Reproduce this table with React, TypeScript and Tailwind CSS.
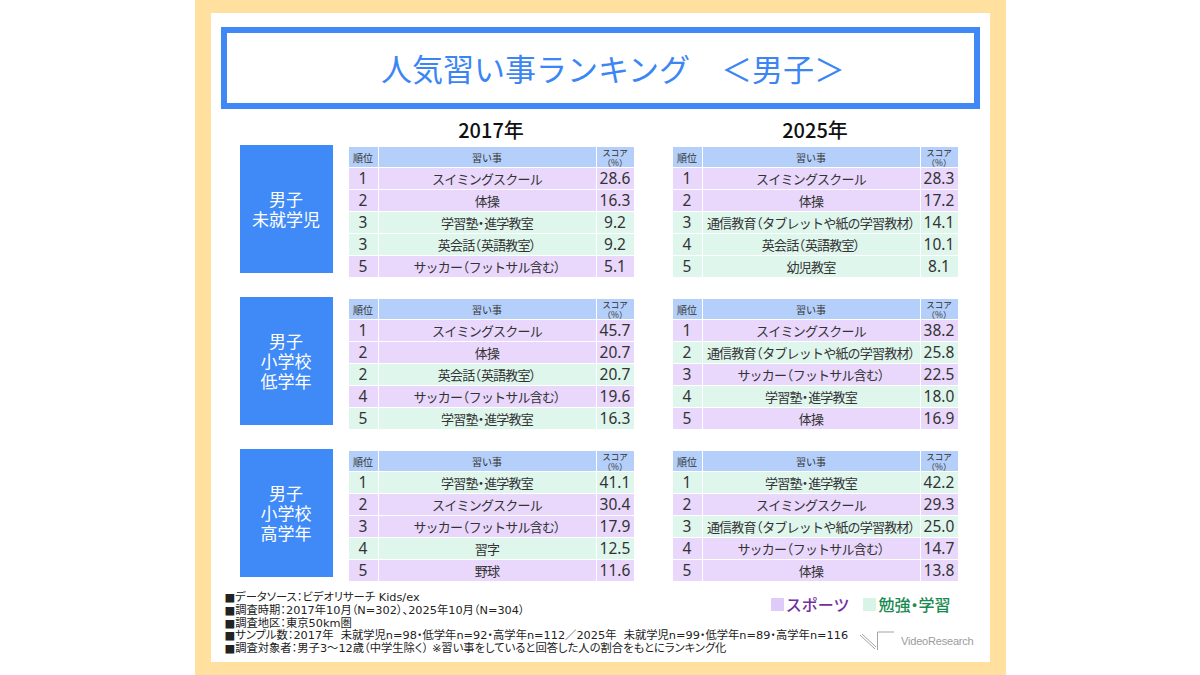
type Row = [string, string, string, 's' | 'g']

type Group = {
  label: string[]
  y2017: Row[]
  y2025: Row[]
}

const SWIM = 'スイミングスクール'
const GYM = '体操'
const JUKU = '学習塾・進学教室'
const EIKAIWA = '英会話（英語教室）'
const SOCCER = 'サッカー（フットサル含む）'
const TSUSHIN = '通信教育（タブレットや紙の学習教材）'

const GROUPS: Group[] = [
  {
    label: ['男子', '未就学児'],
    y2017: [
      ['1', SWIM, '28.6', 's'],
      ['2', GYM, '16.3', 's'],
      ['3', JUKU, '9.2', 'g'],
      ['3', EIKAIWA, '9.2', 'g'],
      ['5', SOCCER, '5.1', 's'],
    ],
    y2025: [
      ['1', SWIM, '28.3', 's'],
      ['2', GYM, '17.2', 's'],
      ['3', TSUSHIN, '14.1', 'g'],
      ['4', EIKAIWA, '10.1', 'g'],
      ['5', '幼児教室', '8.1', 'g'],
    ],
  },
  {
    label: ['男子', '小学校', '低学年'],
    y2017: [
      ['1', SWIM, '45.7', 's'],
      ['2', GYM, '20.7', 's'],
      ['2', EIKAIWA, '20.7', 'g'],
      ['4', SOCCER, '19.6', 's'],
      ['5', JUKU, '16.3', 'g'],
    ],
    y2025: [
      ['1', SWIM, '38.2', 's'],
      ['2', TSUSHIN, '25.8', 'g'],
      ['3', SOCCER, '22.5', 's'],
      ['4', JUKU, '18.0', 'g'],
      ['5', GYM, '16.9', 's'],
    ],
  },
  {
    label: ['男子', '小学校', '高学年'],
    y2017: [
      ['1', JUKU, '41.1', 'g'],
      ['2', SWIM, '30.4', 's'],
      ['3', SOCCER, '17.9', 's'],
      ['4', '習字', '12.5', 'g'],
      ['5', '野球', '11.6', 's'],
    ],
    y2025: [
      ['1', JUKU, '42.2', 'g'],
      ['2', SWIM, '29.3', 's'],
      ['3', TSUSHIN, '25.0', 'g'],
      ['4', SOCCER, '14.7', 's'],
      ['5', GYM, '13.8', 's'],
    ],
  },
]

const FOOTER = [
  '■データソース：ビデオリサーチ Kids/ex',
  '■調査時期：2017年10月（N=302）、2025年10月（N=304）',
  '■調査地区：東京50km圏',
  '■サンプル数：2017年  未就学児n=98・低学年n=92・高学年n=112／2025年  未就学児n=99・低学年n=89・高学年n=116',
  '■調査対象者：男子3～12歳（中学生除く） ※習い事をしていると回答した人の割合をもとにランキング化',
]

const NUM = "font-['Noto_Sans','Noto_Sans_CJK_JP',sans-serif] text-[15.5px]"

// punctuation gets proportional widths, the rest keeps the tight run
function Name({ text }: { text: string }) {
  return (
    <>
      {text.split(/([（）・])/).filter(Boolean).map((p, i) =>
        /[（）・]/.test(p)
          ? <span key={i} className="tracking-normal [font-feature-settings:'palt']">{p}</span>
          : <span key={i}>{p}</span>
      )}
    </>
  )
}

function RankTable({ rows }: { rows: Row[] }) {
  return (
    <div className="mt-[2px] grid w-[285px] grid-cols-[29px_217px_37px] gap-px bg-white text-[#333]">
      {/* header */}
      <div className="flex h-[20px] items-center justify-center bg-[#b3cffa] text-[10px]">順位</div>
      <div className="flex h-[20px] items-center justify-center bg-[#b3cffa] text-[10px]">習い事</div>
      <div className="flex h-[20px] flex-col items-center justify-center bg-[#b3cffa] text-[8.5px] leading-[10px]">
        <div>スコア</div>
        <div>（%）</div>
      </div>
      {rows.map((r, i) => {
        const bg = r[3] === 's' ? 'bg-[#e9d7fc]' : 'bg-[#dff6ed]'
        return [
          <div key={`a${i}`} className={`flex h-[21px] items-center justify-center ${NUM} ${bg}`}>{r[0]}</div>,
          <div key={`b${i}`} className={`flex h-[21px] items-center justify-center whitespace-nowrap text-[13px] tracking-[-0.8px] ${bg}`}>
            <Name text={r[1]} />
          </div>,
          <div key={`c${i}`} className={`flex h-[21px] items-center justify-center ${NUM} ${bg}`}>{r[2]}</div>,
        ]
      })}
    </div>
  )
}

function VideoResearchLogo() {
  return (
    <div className="flex items-center gap-[6px]">
      <svg width="36" height="22" viewBox="0 0 36 22" fill="none" stroke="#a3a3a3" strokeWidth="1">
        <path d="M1 5 L16 19" />
        <path d="M3 4 L17 17" />
        <path d="M18.5 2 V20" />
        <path d="M18.5 2 H35" />
      </svg>
      <span className="font-['Liberation_Sans',sans-serif] text-[11px] tracking-[-0.2px] text-[#9b9b9b]">VideoResearch</span>
    </div>
  )
}

export default function App() {
  return (
    <div className="flex h-[675px] w-[1200px] justify-center bg-white font-['Noto_Sans_CJK_JP',sans-serif] text-[#222]">
      <div className="h-full w-[811px] bg-[#ffe09f] px-4 py-[13px]">
        <div className="h-full bg-white px-[10px] pt-[14px]">
          {/* Title */}
          <div className="flex h-[82px] items-center justify-center border-[6px] border-[#3f88f6] pl-[26px] text-[31px] font-normal text-[#3b86f4]">
            人気習い事ランキング　＜男子＞
          </div>

          {/* Year labels */}
          <div className="mt-[10px] flex h-[22px] items-center pl-[19px] text-[20px] font-medium leading-[22px] text-[#111]">
            <div className="w-[109px]" />
            <div className="w-[285px] text-center">2017年</div>
            <div className="w-[39px]" />
            <div className="w-[285px] text-center">2025年</div>
          </div>

          {/* Groups */}
          <div className="mt-[4px] flex flex-col gap-[20px] pl-[19px]">
            {GROUPS.map((g, i) => (
              <div key={i} className="flex items-start">
                <div className="flex h-[128px] w-[93px] flex-col items-center justify-center bg-[#3f8af7] text-[17px] leading-[20px] text-white">
                  {g.label.map(l => <span key={l}>{l}</span>)}
                </div>
                <div className="ml-[16px]">
                  <RankTable rows={g.y2017} />
                </div>
                <div className="ml-[39px]">
                  <RankTable rows={g.y2025} />
                </div>
              </div>
            ))}
          </div>

          {/* Footer */}
          <div className="mt-[11px] grid">
            <div className="col-start-1 row-start-1 ml-[4px] whitespace-pre font-['DejaVu_Sans','Noto_Sans_CJK_JP',sans-serif] text-[11.3px] leading-[12.75px] text-[#222] [font-feature-settings:'palt']">
              {FOOTER.map(f => <div key={f}>{f}</div>)}
            </div>
            <div className="col-start-1 row-start-1 mr-[29px] mt-[2px] flex items-center gap-[14px] self-start justify-self-end text-[16px] font-medium leading-[20px]">
              <span className="flex items-center">
                <span className="mr-[2px] inline-block h-[13px] w-[13px] bg-[#dfcbfa]" />
                <span className="text-[#7030a0]">スポーツ</span>
              </span>
              <span className="flex items-center [font-feature-settings:'palt']">
                <span className="mr-[2px] inline-block h-[13px] w-[13px] bg-[#d8f4e7]" />
                <span className="text-[#1b8a52]">勉強・学習</span>
              </span>
            </div>
            <div className="col-start-1 row-start-1 mb-[4px] mr-[6px] self-end justify-self-end">
              <VideoResearchLogo />
            </div>
          </div>
        </div>
      </div>
    </div>
  )
}
